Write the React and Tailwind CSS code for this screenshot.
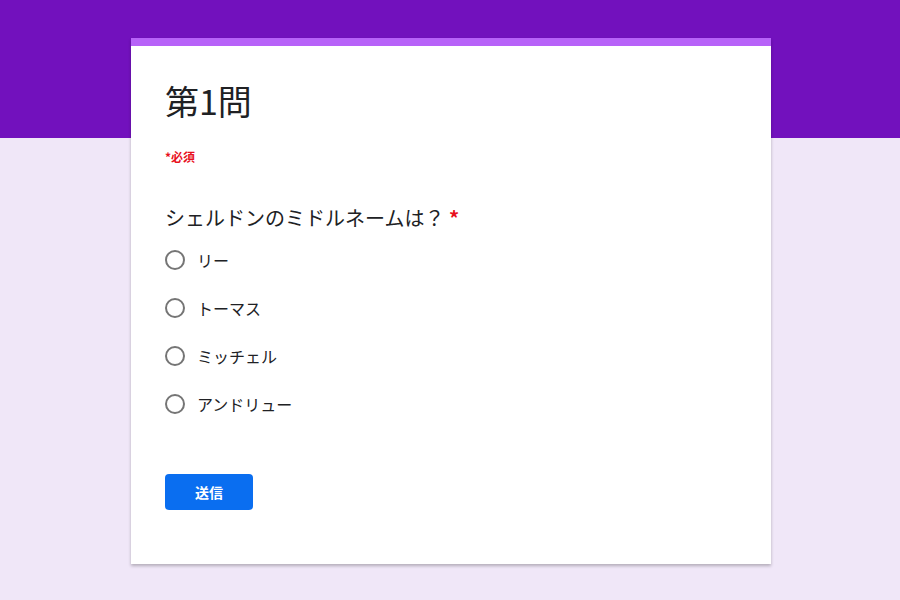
import React from "react";

const options = ["リー", "トーマス", "ミッチェル", "アンドリュー"];

export default function App() {
  return (
    <div
      className="min-h-[600px] w-full bg-[linear-gradient(#7211bd_0px,#7211bd_138px,#f0e7f8_138px)] pt-[38px] pb-[36px]"
      style={{ fontFamily: '"Noto Sans CJK JP", "Noto Sans", sans-serif' }}
    >
      <div className="ml-[131px] w-[640px] bg-white border-t-[8px] border-[#b762f8] shadow-[0_2px_3px_rgba(0,0,0,0.25)] px-[34px] pt-[35px] pb-[54px]">
        <h1 className="text-[34px] leading-[40px] text-[#202124] font-normal">第1問</h1>
        <div className="mt-[28px] text-[12px] leading-[16px] font-bold text-[#e8101d]">*必須</div>
        <div className="mt-[39px] text-[20px] leading-[28px] text-[#202124]">
          シェルドンのミドルネームは？ <span className="text-[#e8101d] font-bold">*</span>
        </div>
        <div className="mt-[4px] flex flex-col">
          {options.map((o) => (
            <label key={o} className="flex h-[48px] items-center gap-[12px] text-[16px] text-[#202124]">
              <span className="h-[20px] w-[20px] rounded-full border-2 border-[#757575]" />
              <span>{o}</span>
            </label>
          ))}
        </div>
        <button className="mt-[46px] h-[36px] w-[88px] rounded-[4px] bg-[#0a6ef0] text-[14px] font-bold text-white">
          送信
        </button>
      </div>
    </div>
  );
}
